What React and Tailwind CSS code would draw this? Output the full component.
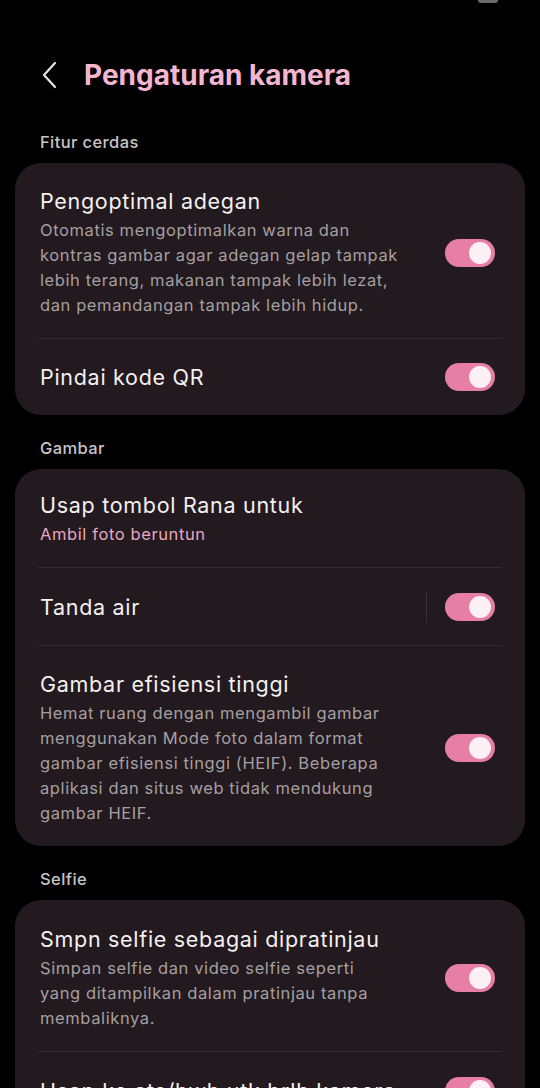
import React from 'react';

const font = { fontFamily: 'Inter, "Noto Sans", sans-serif' };

function Toggle() {
  return (
    <div className="w-[50px] h-[28px] rounded-full bg-[#e77fa4] flex items-center justify-end pr-[4px] shrink-0">
      <div className="w-[22px] h-[22px] rounded-full bg-[#fdf0f4]" />
    </div>
  );
}

function Divider() {
  return <div className="mx-[23px] h-px bg-[#352c30]" />;
}

function Label({ children }) {
  return (
    <div className="pl-[40px] pt-[22px] pb-[10px] text-[16.5px] leading-[22px] tracking-[0.4px] font-medium text-[#c9c4c6]">
      {children}
    </div>
  );
}

function Desc({ lines }) {
  return (
    <div className="mt-[3px] text-[16.5px] leading-[25px] tracking-[0.6px] text-[#a69fa2]">
      {lines.map((l, i) => (
        <div key={i} className="whitespace-nowrap">{l}</div>
      ))}
    </div>
  );
}

function Title({ children }) {
  return (
    <div className="text-[21.5px] leading-[28px] tracking-[0.7px] text-[#f4eff1] whitespace-nowrap">{children}</div>
  );
}

function Row({ title, lines, pt = 'pt-[24px]', pb = 'pb-[20px]' }) {
  return (
    <div className={`flex items-center pl-[25px] pr-[30px] ${pt} ${pb}`}>
      <div className="flex-1">
        <Title>{title}</Title>
        <Desc lines={lines} />
      </div>
      <Toggle />
    </div>
  );
}

function SimpleRow({ title, sep, h = 'h-[77px]' }) {
  return (
    <div className={`flex items-center pl-[25px] pr-[30px] ${h}`}>
      <div className="flex-1">
        <Title>{title}</Title>
      </div>
      {sep && <div className="w-px h-[30px] bg-[#3a3135] mr-[18px]" />}
      <Toggle />
    </div>
  );
}

export default function App() {
  return (
    <div className="w-[540px] h-[1088px] bg-black overflow-hidden" style={font}>
      {/* status bar */}
      <div className="h-[8px] flex justify-end pr-[42px]">
        <div className="w-[20px] h-[3px] rounded-b bg-[#6b6b6b]" />
      </div>

      {/* header */}
      <div className="flex items-center h-[134px] pb-[1px] -mb-[33px]">
        <svg width="16" height="28" viewBox="0 0 16 28" className="ml-[41px]">
          <path d="M14 2 L3 14 L14 26" fill="none" stroke="#e9e4e6" strokeWidth="2.2" strokeLinecap="round" strokeLinejoin="round" />
        </svg>
        <h1 className="ml-[27px] text-[28px] leading-[36px] font-bold text-[#f4b5cf]">Pengaturan kamera</h1>
      </div>

      <Label>Fitur cerdas</Label>
      <div className="mx-[15px] rounded-[26px] bg-[#221a1e]">
        <Row
          title="Pengoptimal adegan"
          lines={[
            'Otomatis mengoptimalkan warna dan',
            'kontras gambar agar adegan gelap tampak',
            'lebih terang, makanan tampak lebih lezat,',
            'dan pemandangan tampak lebih hidup.',
          ]}
        />
        <Divider />
        <SimpleRow title="Pindai kode QR" h="h-[76px]" />
      </div>

      <Label>Gambar</Label>
      <div className="mx-[15px] rounded-[26px] bg-[#221a1e]">
        <div className="pl-[25px] pr-[30px] pt-[22px] pb-[22px]">
          <Title>Usap tombol Rana untuk</Title>
          <div className="mt-[4px] text-[16.5px] leading-[22px] tracking-[0.6px] text-[#eaa6c2]">Ambil foto beruntun</div>
        </div>
        <Divider />
        <SimpleRow title="Tanda air" sep />
        <Divider />
        <Row
          title="Gambar efisiensi tinggi"
          lines={[
            'Hemat ruang dengan mengambil gambar',
            'menggunakan Mode foto dalam format',
            'gambar efisiensi tinggi (HEIF). Beberapa',
            'aplikasi dan situs web tidak mendukung',
            'gambar HEIF.',
          ]}
        />
      </div>

      <Label>Selfie</Label>
      <div className="mx-[15px] rounded-[26px] bg-[#221a1e]">
        <Row
          title="Smpn selfie sebagai dipratinjau"
          pt="pt-[25px]"
          lines={[
            'Simpan selfie dan video selfie seperti',
            'yang ditampilkan dalam pratinjau tanpa',
            'membaliknya.',
          ]}
        />
        <Divider />
        <SimpleRow title="Usap ke ats/bwh utk brlh kamera" h="h-[77px]" />
      </div>
    </div>
  );
}
